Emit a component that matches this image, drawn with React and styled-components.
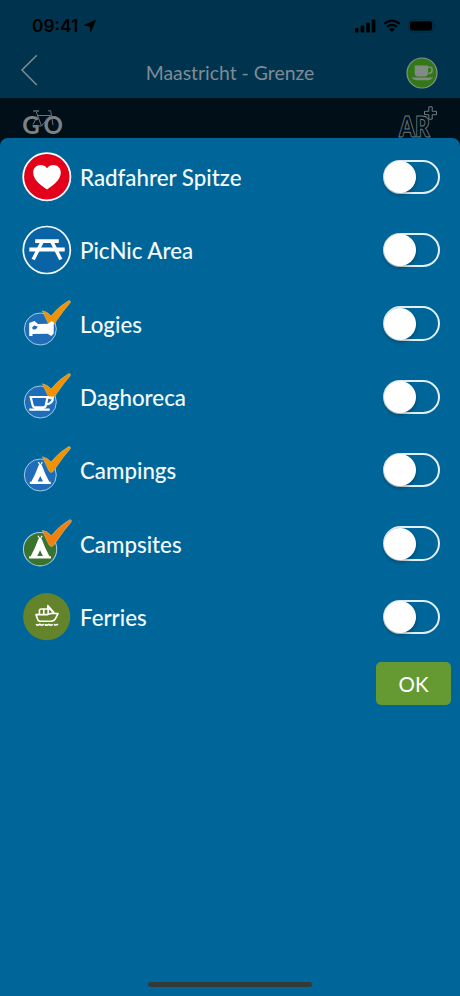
import React, { useState } from "react";
import styled, { createGlobalStyle } from "styled-components";

const GlobalStyle = createGlobalStyle`
    * {
        box-sizing: border-box;
    }
    body {
        margin: 0;
        background: #000f18;
        font-family: Lato, "Liberation Sans", sans-serif;
    }
`;

const Screen = styled.div`
    display: flex;
    flex-direction: column;
    height: 996px;
    width: 460px;
    overflow: hidden;
    background: #000f18;
`;

const StatusBar = styled.div`
    display: flex;
    flex: 0 0 48px;
    justify-content: space-between;
    align-items: center;
    padding: 3px 24px 0 32px;
    background: #00334e;
`;

const Clock = styled.div`
    display: flex;
    align-items: center;
    gap: 6px;
    color: #000;
    font-family: Inter, "Liberation Sans", sans-serif;
    font-size: 17.3px;
    font-weight: 600;
    line-height: 20px;
`;

const Indicators = styled.div`
    display: flex;
    align-items: center;
    gap: 7px;
`;

const NavBar = styled.header`
    display: flex;
    flex: 0 0 50px;
    justify-content: space-between;
    align-items: center;
    padding: 0 22px 0 20px;
    background: #00334e;
`;

const NavTitle = styled.h1`
    margin: 0;
    color: #7f8b94;
    font-size: 19.4px;
    font-weight: 400;
    line-height: 24px;
`;

const ToolBar = styled.div`
    display: flex;
    flex: 0 0 40px;
    justify-content: space-between;
    align-items: flex-start;
    padding: 6px 20px 0 21px;
`;

const Sheet = styled.main`
    display: flex;
    flex: 1;
    flex-direction: column;
    padding: 2.2px 9px 0 0;
    border-radius: 8px 8px 0 0;
    background: #006699;
`;

const Row = styled.div`
    display: flex;
    align-items: center;
    height: 73.35px;
    padding: 0 11px 0 21px;
`;

const RowLabel = styled.span`
    flex: 1;
    margin-left: 7px;
    padding-top: 2px;
    color: #f4fbff;
    font-size: 22.3px;
    font-weight: 500;
    line-height: 28px;
`;

const Toggle = styled.button`
    display: flex;
    align-items: center;
    justify-content: ${props => props.$on ? "flex-end" : "flex-start"};
    width: 57px;
    height: 34.5px;
    padding: 0;
    border: 2px solid #e3eff5;
    border-radius: 18px;
    background: ${props => props.$on ? "#65972f" : "transparent"};
`;

const Knob = styled.span`
    width: 32px;
    height: 32px;
    margin: 0 -1px;
    flex: none;
    border-radius: 50%;
    background: #fff;
    box-shadow: 0 2px 4px rgba(0,0,0,0.3);
`;

const OkButton = styled.button`
    align-self: flex-end;
    width: 75px;
    height: 43px;
    margin-top: 8.5px;
    padding: 0;
    border: 0;
    border-radius: 5px;
    background: #659a33;
    color: #fff;
    font-family: inherit;
    font-size: 20.5px;
`;

const HomeIndicator = styled.div`
    align-self: center;
    width: 164px;
    height: 5px;
    margin: auto 0 9.5px 9px;
    border-radius: 3px;
    background: #343a38;
`;

const Icon = styled.svg`
    display: block;
    flex: none;
    overflow: visible;
`;

const LocationArrow = () => (
    <Icon width="12" height="12" viewBox="0 0 12 12">
        <path d="M11.4.4 6.7 11.5 6.1 6.1.5 5.3Z" fill="#000" stroke="#000" strokeWidth="1" strokeLinejoin="round"/>
    </Icon>
);

const Signal = () => (
    <Icon width="21" height="14" viewBox="0 0 21 14">
        <rect x="0" y="9" width="3.6" height="4.5" rx="1"/>
        <rect x="5.6" y="6.5" width="3.6" height="7" rx="1"/>
        <rect x="11.2" y="3.7" width="3.6" height="9.8" rx="1"/>
        <rect x="16.8" y=".6" width="3.6" height="12.9" rx="1"/>
    </Icon>
);

const Wifi = () => (
    <Icon width="18" height="14" viewBox="0 0 18 14">
        <path d="M1.3 5Q9-1.8 16.7 5M4.2 8Q9 3.7 13.8 8" fill="none" stroke="#000" strokeWidth="2.3"/>
        <path d="M6.2 10.2Q9 7.8 11.8 10.2L9 13.2Z"/>
    </Icon>
);

const Battery = () => (
    <Icon width="28" height="14" viewBox="0 0 28 14">
        <rect x=".5" y=".5" width="24.5" height="12.6" rx="3.5" fill="none" stroke="#002a42"/>
        <rect x="2" y="2.2" width="22" height="9.4" rx="2"/>
        <path d="M26.4 5v4q1.2-.6 1.2-2t-1.2-2" fill="#00263b"/>
    </Icon>
);

const BackArrow = () => (
    <Icon width="34" height="32" viewBox="0 0 34 32">
        <path d="M16.8 -1.7 2 13 16.8 28" fill="none" stroke="#7f8b94" strokeWidth="1.5"/>
    </Icon>
);

const CoffeeBadge = () => (
    <Icon width="32" height="32" viewBox="0 0 32 32">
        <circle cx="16" cy="16" r="15" fill="#327817" stroke="#84918a" strokeWidth="1.2"/>
        <g fill="#818a85">
            <path d="M8.7 8.5H22V16q0 3.5-3.5 3.5h-6.3q-3.5 0-3.5-3.5Z"/>
            <path d="M5.3 20.6h22q-2 2.6-5 2.6H10.5q-3 0-5.2-2.6Z"/>
        </g>
        <path d="M22 10.2h2q2 0 2 2v1.6q0 2.4-3.7 2.8" fill="none" stroke="#818a85" strokeWidth="1.6"/>
    </Icon>
);

const GoLogo = () => (
    <Icon width="42" height="34" viewBox="0 0 42 34">
        <g fill="#7d8286" fontFamily="Lato, sans-serif" fontWeight="700">
            <text x="1.2" y="30.3" fontSize="24">G</text>
            <text x="22.6" y="30.3" fontSize="24">O</text>
        </g>
        <g fill="none" stroke="#68747a" strokeWidth="1">
            <path d="M15.3 8 20.5 22 29.5 11.5H16.7L12 20.5M20.5 22H12M27 6.8h2.7L32 21"/>
            <path d="M12.3 7H18" strokeWidth="1.4"/>
        </g>
    </Icon>
);

const ArLogo = () => (
    <Icon width="42" height="34" viewBox="0 0 42 34">
        <g stroke="#6f7b80" strokeWidth="1" strokeLinejoin="round">
            <text
                x="1" y="33" fill="#000f18" fontFamily="Lato, sans-serif" fontSize="29" fontWeight="800"
                textLength="31" lengthAdjust="spacingAndGlyphs"
            >AR</text>
            <path d="M30.8 2.8h3.4v4.5h4.3v3.4h-4.3v4.5h-3.4v-4.5h-4.3V7.3h4.3Z" fill="#000f18"/>
        </g>
    </Icon>
);

const Check = ({color="#f39200"}) => (
    <path
        d="M21.3 12.8Q26.5 13.6 30 18 38 8.2 47.8 2.6 49.9 2.4 49.3 4.7 42 13 36 22 33.5 26 31.5 28 29.5 29.2 28 27 24.7 20 21.3 12.8Z"
        fill={color} stroke="#b7b184" strokeWidth=".7" strokeLinejoin="round"
    />
);

const SmallDisc = ({color="#1f6db8"}) => (
    <circle cx="19.3" cy="31" r="16" fill={color} stroke="#9dcbea" strokeWidth="1"/>
);

const Tent = () => (
    <>
        <path d="M17.3 18 20.3 23M21.3 18 18.3 23" stroke="#fff" strokeWidth="1.2"/>
        <path fillRule="evenodd" fill="#fff" d="M17.8 21H20.8Q24 30 28.3 37.8H29.8V40H8.8V37.8H10.3Q14.6 30 17.8 21ZM19.3 32 16.6 37.4h5.4Z"/>
    </>
);

const Heart = () => (
    <>
        <circle cx="25.8" cy="25.8" r="23.6" fill="#e2001a" stroke="#fff" strokeWidth="1.8"/>
        <path fill="#fff" d="M26 38.5C22 35.5 12.2 29.5 12.2 21.4 12.2 14 21.8 11.4 26 17.3 30.2 11.4 39.8 14 39.8 21.4 39.8 29.5 30 35.5 26 38.5Z"/>
    </>
);

const Picnic = () => (
    <>
        <circle cx="25.8" cy="26" r="23.5" fill="#0a63a5" stroke="#f3faff" strokeWidth="1.7"/>
        <g fill="none" stroke="#fff">
            <path d="M14.2 17.2h23.6M8.3 25.5h35.4" strokeWidth="3.8"/>
            <path d="M21 18 12.2 35.5M31 18 39.8 35.5" strokeWidth="3.5"/>
        </g>
    </>
);

const Bed = () => (
    <>
        <SmallDisc/>
        <Check/>
        <path fill="#fff" d="M8.2 25 13.5 23 17 26 27 25.8 30.3 23.3 32.7 24V35.5L30.3 38 26.5 35.8 11.5 36V38H8.2Z"/>
        <path d="M11 29.8 13 27.5 16.8 28.6 15 31.3 12 31.6Z" fill="#1f6db8"/>
    </>
);

const Cup = () => (
    <>
        <SmallDisc/>
        <Check/>
        <path
            d="M9.7 26h16.8l-1.6 8q-.4 2.3-2.5 2.3h-8.2q-2.1 0-2.6-2.3ZM26 26.7h5.8q.3 5.8-6.8 6.7M8.3 38.6h20.4"
            fill="none" stroke="#fff" strokeWidth="2.2"
        />
    </>
);

const Camping = () => (
    <>
        <SmallDisc/>
        <Tent/>
        <Check/>
    </>
);

const Campsite = () => (
    <g transform="translate(-1 -1) scale(1.04)">
        <SmallDisc color="#39732e"/>
        <Tent/>
        <Check color="#f57f0c"/>
    </g>
);

const Ferry = () => (
    <>
        <circle cx="25.7" cy="25.7" r="23.6" fill="#63842a"/>
        <g fill="none" stroke="#fff" strokeWidth="1.6" strokeLinejoin="round">
            <path d="M15 23.6h11.5l4.5-1.4 6 .4-2.4 4.8q-1.6 2.8-4.6 2.8H19.5q-2.3 0-3-2.3Z"/>
            <path d="M18.4 23.2v-3.4q0-1.8 1.8-1.8h8.6l4.2 4M26.8 17.6v-3L33 21.5M22.8 18.2v5M27.2 18.2v5"/>
            <path d="M15 33.2q1.8 1.8 4 0 1.8 1.8 4 0M23.8 33.5q1.8 1.4 4-.2 1.8 1.8 4 0M33 33.3q1.8 1.4 4-.2"/>
        </g>
    </>
);

const categories = [
    {label: "Radfahrer Spitze", Drawing: Heart},
    {label: "PicNic Area", Drawing: Picnic},
    {label: "Logies", Drawing: Bed},
    {label: "Daghoreca", Drawing: Cup},
    {label: "Campings", Drawing: Camping},
    {label: "Campsites", Drawing: Campsite},
    {label: "Ferries", Drawing: Ferry}
];

const CategoryRow = ({label, Drawing}) => {
    const [on, setOn] = useState(false);
    return (
        <Row>
            <Icon width="52" height="52" viewBox="0 0 52 52">
                <Drawing/>
            </Icon>
            <RowLabel>{label}</RowLabel>
            <Toggle $on={on} role="switch" aria-checked={on} aria-label={label} onClick={() => setOn(!on)}>
                <Knob/>
            </Toggle>
        </Row>
    );
};

const App = () => (
    <>
        <GlobalStyle/>
        <Screen>
            <StatusBar>
                <Clock>09:41 <LocationArrow/></Clock>
                <Indicators>
                    <Signal/>
                    <Wifi/>
                    <Battery/>
                </Indicators>
            </StatusBar>
            <NavBar>
                <BackArrow/>
                <NavTitle>Maastricht - Grenze</NavTitle>
                <CoffeeBadge/>
            </NavBar>
            <ToolBar>
                <GoLogo/>
                <ArLogo/>
            </ToolBar>
            <Sheet>
                {categories.map(category => <CategoryRow key={category.label} {...category}/>)}
                <OkButton>OK</OkButton>
                <HomeIndicator/>
            </Sheet>
        </Screen>
    </>
);

export default App;
